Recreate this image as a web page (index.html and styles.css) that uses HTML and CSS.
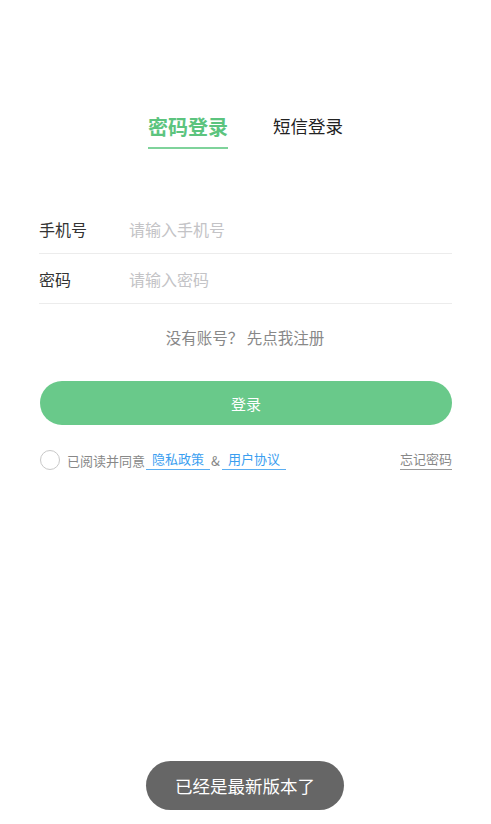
FILE: index.html
```html
<!DOCTYPE html>
<html lang="zh">
<head>
<meta charset="utf-8">
<link rel="stylesheet" href="styles.css">
</head>
<body>
<div class="page">
  <div class="tabs">
    <div class="tab active">密码登录</div>
    <div class="tab">短信登录</div>
  </div>
  <div class="form">
    <div class="row">
      <span class="label">手机号</span>
      <span class="placeholder">请输入手机号</span>
    </div>
    <div class="row">
      <span class="label">密码</span>
      <span class="placeholder">请输入密码</span>
    </div>
  </div>
  <div class="register">没有账号？ 先点我注册</div>
  <div class="btn">登录</div>
  <div class="agree">
    <span class="circle"></span>
    <span class="gray">已阅读并同意</span>
    <span class="link first">隐私政策</span>
    <span class="gray amp">&amp;</span>
    <span class="link">用户协议</span>
    <span class="forgot">忘记密码</span>
  </div>
  <div class="toast">已经是最新版本了</div>
</div>
</body>
</html>
```
FILE: styles.css
```css
html, body {
  margin: 0;
  padding: 0;
  background: #fff;
}
body {
  font-family: "Noto Sans CJK SC", "Noto Sans", sans-serif;
  width: 491px;
  height: 824px;
  overflow: hidden;
}
.page {
  position: relative;
  height: 824px;
}
.tabs {
  display: flex;
  justify-content: center;
  align-items: flex-start;
  gap: 45px;
  padding-top: 112px;
  padding-left: 0;
}
.tab {
  font-size: 17.5px;
  line-height: 28px;
  color: #222;
}
.tab.active {
  font-size: 20px;
  font-weight: bold;
  color: #5cc47e;
  border-bottom: 2px solid #7fd39b;
  height: 34px;
  padding-top: 1px;
  box-sizing: content-box;
}
.form {
  margin-top: 55px;
  padding: 0 39px;
}
.row {
  display: flex;
  align-items: center;
  height: 49px;
  border-bottom: 1px solid #ececec;
}
.label {
  width: 90px;
  font-size: 16px;
  color: #333;
}
.placeholder {
  font-size: 16px;
  color: #c3c3c6;
}
.register {
  margin-top: 23px;
  text-align: center;
  font-size: 15.5px;
  line-height: 20px;
  color: #888;
  padding-right: 1px;
}
.btn {
  margin: 34px 39px 0 40px;
  height: 44px;
  border-radius: 22px;
  background: #69c98a;
  color: #fff;
  font-size: 15px;
  display: flex;
  align-items: center;
  justify-content: center;
}
.agree {
  margin: 24px 39px 0 40px;
  display: flex;
  align-items: center;
  height: 22px;
  font-size: 13px;
}
.circle {
  width: 18px;
  height: 18px;
  border: 1px solid #c8c8c8;
  border-radius: 50%;
  margin-right: 7px;
}
.gray {
  color: #888;
}
.amp {
  margin: 0 2px 0 1px;
}
.link {
  color: #3a9ef0;
  border-bottom: 1px solid #5aaef2;
  padding: 0 6px 1px 6px;
  line-height: 18px;
}
.link.first {
  margin-left: 1px;
}
.forgot {
  margin-left: auto;
  color: #888;
  border-bottom: 1px solid #9a9a9a;
  line-height: 18px;
  padding-bottom: 1px;
}
.toast {
  position: absolute;
  left: 146px;
  top: 761px;
  width: 198px;
  height: 49px;
  border-radius: 25px;
  background: #666;
  color: #fff;
  font-size: 17.5px;
  display: flex;
  align-items: center;
  justify-content: center;
}
```
